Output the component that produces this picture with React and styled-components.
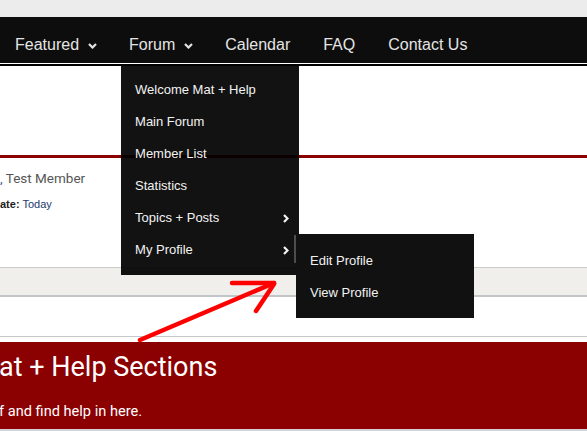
import React from 'react'
import styled, { createGlobalStyle } from 'styled-components'

const Global = createGlobalStyle`
	html, body {
		margin: 0;
		padding: 0;
		background: #ffffff;
		overflow: hidden;
	}
	body {
		font-family: "Liberation Sans", Arial, sans-serif;
	}
`

const Page = styled.div`
	position: relative;
	width: 587px;
	height: 431px;
	overflow: hidden;
	background: #d4d4d4;
`

const TopStrip = styled.div`
	height: 17px;
	background: #ececec;
`

const NavBar = styled.nav`
	height: 46px;
	background: #0d0d0d;
	display: flex;
	position: relative;
	z-index: 5;
`

const NavList = styled.ul`
	display: flex;
	margin: 0 0 0 -1px;
	padding: 0;
	list-style: none;
`

const NavItem = styled.li`
	position: relative;
	height: 100%;
	box-sizing: border-box;
	padding: 18px ${p => p.$wide ? '17px' : '16px'} 0 16px;
	display: flex;
	align-items: flex-start;
	gap: 9px;
	color: #e4e4e4;
	font-size: 16px;
	line-height: 20px;
	white-space: nowrap;
`

const ChevronBox = styled.span`
	display: flex;
	align-items: center;
	height: 20px;
	padding-top: ${p => p.$down ? '1px' : '0'};
`

const DownChevron = () => (
	<ChevronBox $down>
		<svg width="9" height="6" viewBox="0 0 9 6">
			<polyline points="1,1 4.5,4.5 8,1" fill="none" stroke="#e4e4e4" strokeWidth="2.2" />
		</svg>
	</ChevronBox>
)

const RightChevron = () => (
	<ChevronBox>
		<svg width="6" height="9" viewBox="0 0 6 9">
			<polyline points="1,1 4.5,4.5 1,8" fill="none" stroke="#f2f2f2" strokeWidth="2.2" />
		</svg>
	</ChevronBox>
)

const Dropdown = styled.ul`
	position: absolute;
	top: calc(100% + 1px);
	left: 8px;
	width: 178px;
	margin: 0;
	padding: 10px 0 9px;
	list-style: none;
	background: rgba(0, 0, 0, 0.93);
	z-index: 10;
`

const SubMenu = styled(Dropdown)`
	top: 0;
	left: calc(100% - 3px);
	padding: 11px 0 9px;
	background: #111111;
`

const MenuItem = styled.li`
	position: relative;
	height: 32px;
	box-sizing: border-box;
	padding: 0 10px 0 14px;
	display: flex;
	align-items: center;
	justify-content: space-between;
	color: #f2f2f2;
	font-size: 13px;
	white-space: nowrap;
`

const HoverBar = styled.span`
	position: absolute;
	right: 3px;
	top: 1px;
	width: 2px;
	height: 28px;
	background: #4d4d4d;
`

const NavRule = styled.div`
	height: 2px;
	border-top: 1px solid #ffffff;
	background: #000000;
`

const Banner = styled.div`
	height: 89px;
	background: #ffffff;
`

const RedRule = styled.div`
	height: 3px;
	background: #8b0000;
`

const Profile = styled.div`
	height: 109px;
	box-sizing: border-box;
	padding-top: 10px;
	background: #ffffff;
	font-family: Roboto, "Liberation Sans", sans-serif;
`

const Greeting = styled.div`
	font-size: 13.5px;
	line-height: 20px;
	color: #555555;
`

const Comma = styled.span`
	color: #3b5f9e;
`

const Meta = styled.div`
	margin-top: 9px;
	font-family: "Liberation Sans", Arial, sans-serif;
	font-size: 11px;
	line-height: 14px;
	color: #222222;

	b {
		font-weight: bold;
	}
`

const MetaValue = styled.span`
	color: #1d3a6b;
`

const InfoBar = styled.div`
	height: 30px;
	box-sizing: border-box;
	border-top: 1px solid #cbcbcb;
	border-bottom: 2px solid #c3c6c9;
	background: #f0efec;
`

const Gap = styled.div`
	height: 45px;
	box-sizing: border-box;
	padding-top: 39px;
	background: #ffffff;

	&::before {
		content: '';
		display: block;
		height: 1px;
		background: #c6c8ca;
	}
`

const Section = styled.div`
	height: 87px;
	box-sizing: border-box;
	padding-top: 8px;
	background: #8b0000;
	color: #ffffff;
	font-family: Roboto, "Liberation Sans", sans-serif;
`

const SectionTitle = styled.h2`
	margin: 0 0 0 -1px;
	font-size: 27px;
	line-height: 34px;
	font-weight: 400;
	white-space: nowrap;
`

const SectionText = styled.p`
	margin: 17px 0 0 -1px;
	font-size: 14.6px;
	line-height: 20px;
	white-space: nowrap;
`

const Annotation = styled.svg`
	position: absolute;
	left: 0;
	top: 0;
	pointer-events: none;
	z-index: 20;
`

const forumLinks = ['Welcome Mat + Help', 'Main Forum', 'Member List', 'Statistics']

const App = () => (
	<>
		<Global />
		<Page>
			<TopStrip />
			<NavBar>
				<NavList>
					<NavItem>Featured <DownChevron /></NavItem>
					<NavItem>
						Forum <DownChevron />
						<Dropdown>
							{forumLinks.map(link => <MenuItem key={link}>{link}</MenuItem>)}
							<MenuItem>Topics + Posts <RightChevron /></MenuItem>
							<MenuItem>
								My Profile <RightChevron />
								<HoverBar />
								<SubMenu>
									<MenuItem>Edit Profile</MenuItem>
									<MenuItem>View Profile</MenuItem>
								</SubMenu>
							</MenuItem>
						</Dropdown>
					</NavItem>
					<NavItem $wide>Calendar</NavItem>
					<NavItem $wide>FAQ</NavItem>
					<NavItem>Contact Us</NavItem>
				</NavList>
			</NavBar>
			<NavRule />
			<Banner />
			<RedRule />
			<Profile>
				<Greeting><Comma>,</Comma> Test Member</Greeting>
				<Meta><b>ate:</b> <MetaValue>Today</MetaValue></Meta>
			</Profile>
			<InfoBar />
			<Gap />
			<Section>
				<SectionTitle>at + Help Sections</SectionTitle>
				<SectionText>f and find help in here.</SectionText>
			</Section>
			<Annotation width="587" height="431" viewBox="0 0 587 431">
				<g fill="none" stroke="#ff0000" strokeWidth="4.5" strokeLinecap="round" strokeLinejoin="round">
					<line x1="140" y1="340" x2="274" y2="283" />
					<line x1="232" y1="283" x2="274" y2="283" />
					<line x1="256" y1="311" x2="274" y2="284" />
				</g>
			</Annotation>
		</Page>
	</>
)

export default App
